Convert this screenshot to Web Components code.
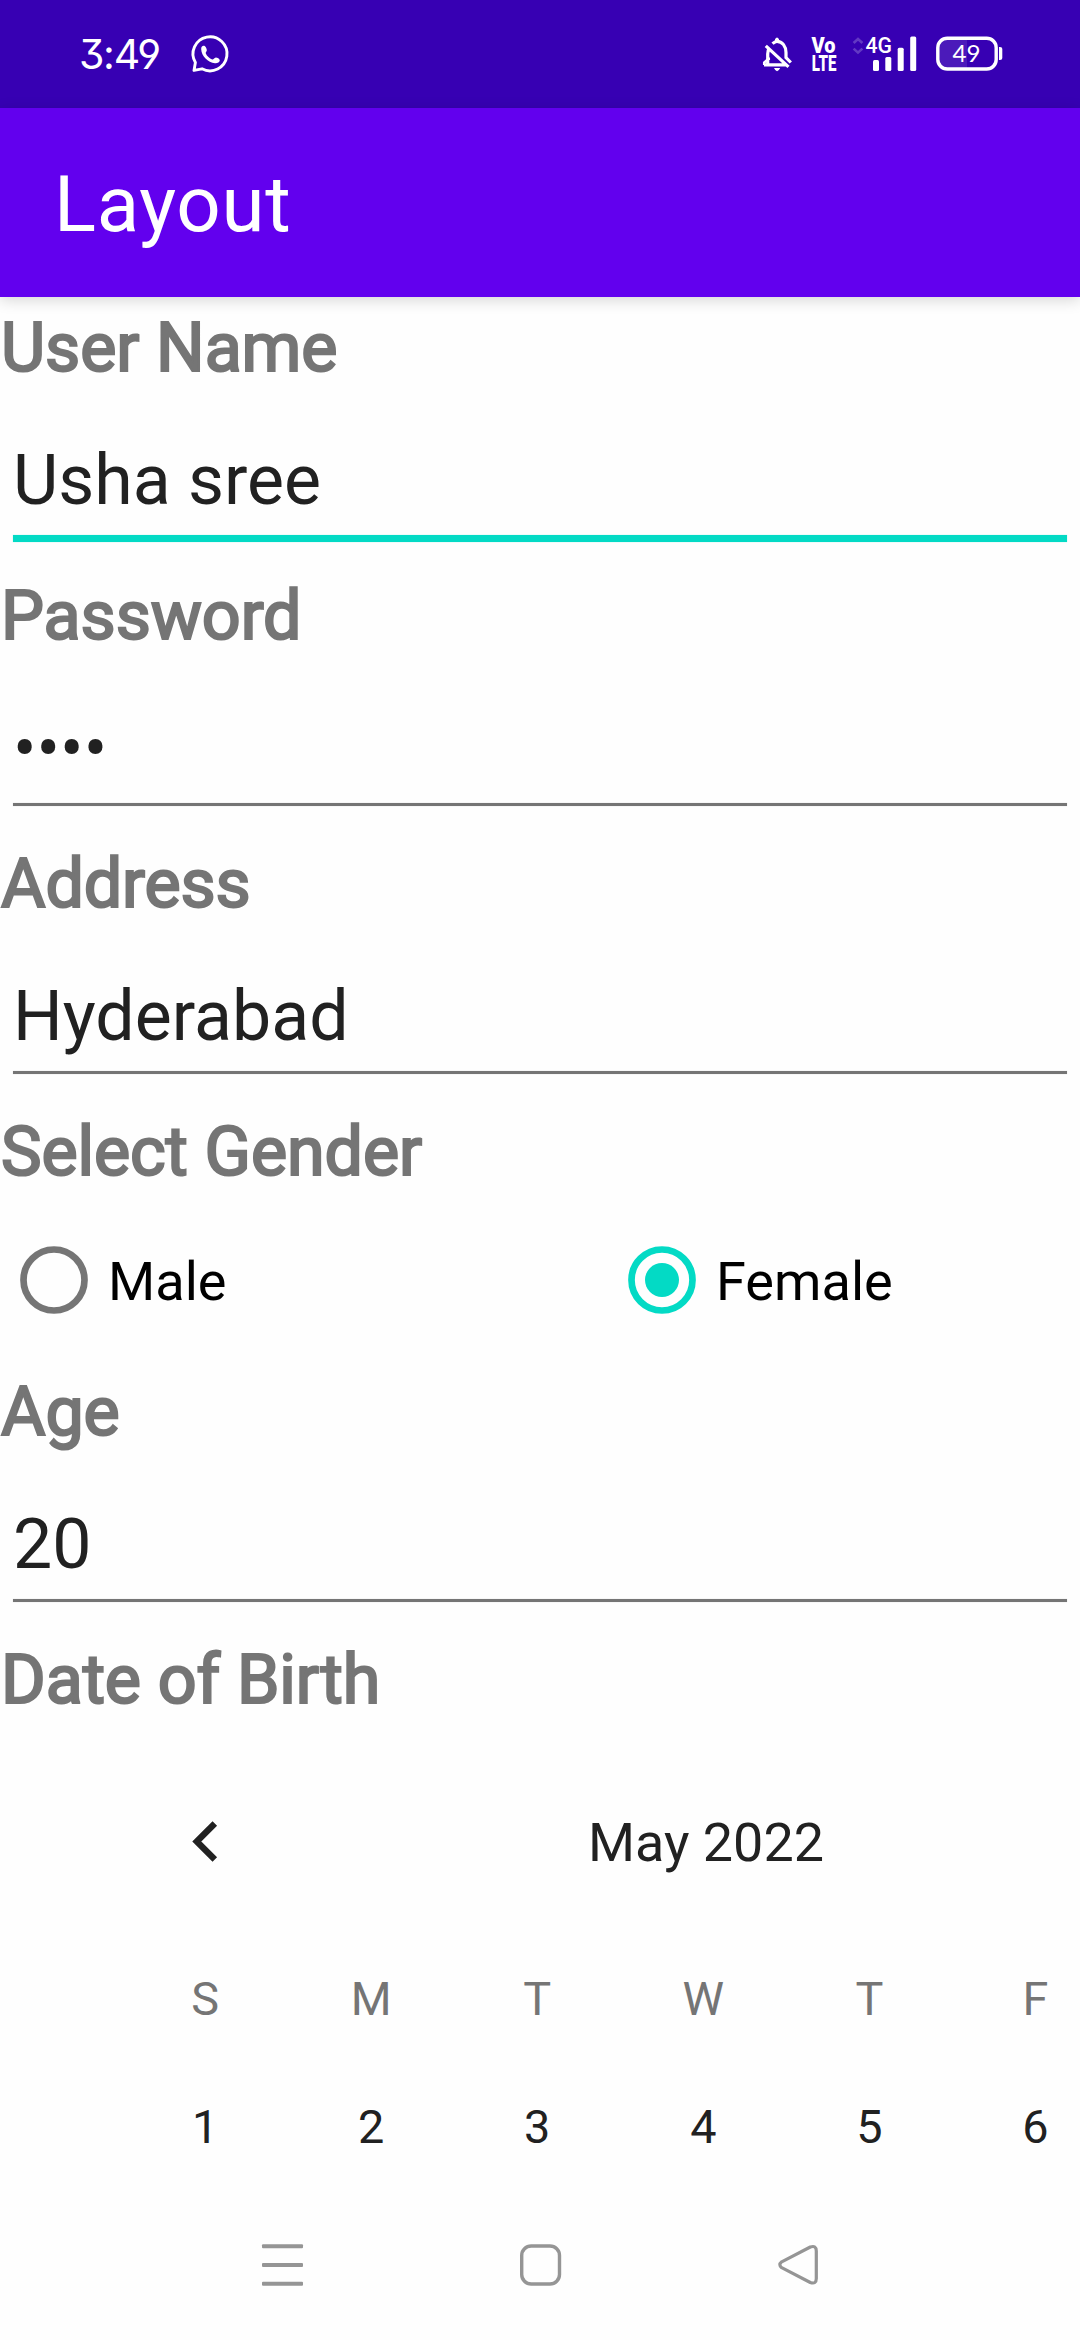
<!DOCTYPE html>
<html lang="en">
<head>
<meta charset="utf-8">
<title>Layout</title>
<style>
html,body{margin:0;padding:0;background:#fefefe}
body{width:1080px;height:2340px;overflow:hidden;font-family:Roboto,sans-serif}
</style>
</head>
<body>
<phone-screen>
  <status-bar slot="status" time="3:49" battery="49"></status-bar>
  <app-bar slot="bar">Layout</app-bar>
  <form-label>User Name</form-label>
  <text-field focused>Usha sree</text-field>
  <form-label>Password</form-label>
  <text-field>••••</text-field>
  <form-label>Address</form-label>
  <text-field>Hyderabad</text-field>
  <form-label>Select Gender</form-label>
  <radio-row>
    <radio-option>Male</radio-option>
    <radio-option checked>Female</radio-option>
  </radio-row>
  <form-label>Age</form-label>
  <text-field>20</text-field>
  <form-label>Date of Birth</form-label>
  <month-calendar month="May 2022" weekdays="S,M,T,W,T,F" days="1,2,3,4,5,6"></month-calendar>
  <nav-bar slot="nav"></nav-bar>
</phone-screen>
<script>
function define(name, render) {
  customElements.define(name, class extends HTMLElement {
    connectedCallback() {
      if (this.shadowRoot) return;
      this.attachShadow({ mode: 'open' }).innerHTML = render(this);
    }
  });
}

define('phone-screen', () => `
<style>
:host{display:flex;flex-direction:column;width:1080px;height:2340px;overflow:hidden;background:#fefefe}
main{flex:1;min-height:0;overflow:hidden;display:flex;flex-direction:column}
</style>
<slot name="status"></slot><slot name="bar"></slot><main><slot></slot></main><slot name="nav"></slot>`);

define('status-bar', el => `
<style>
:host{display:flex;box-sizing:border-box;height:108px;padding:0 74px 0 79px;background:#3700b3;color:#fff;align-items:center;flex:none}
.time{font:400 41px/48px Inter,sans-serif;font-feature-settings:"cv09","cv04";letter-spacing:-1.3px;width:110px;white-space:nowrap}
svg{display:block;flex:none}
.gap{flex:1}
.icons{display:flex;align-items:center}
</style>
<span class="time">${el.getAttribute('time')}</span>
<svg width="42" height="42" viewBox="189 33 42 42" fill="none" stroke="#fff" stroke-width="2.9" stroke-linejoin="round">
  <path d="M195.4 62.5A17 17 0 1 1 202 68.8L194 70.4Z"/>
  <path fill="#fff" stroke="none" d="M201.2 49.2C201 47 202.4 45.4 204.2 45.8C205.6 46.2 207 49.2 206.8 50.6C206.6 51.8 205.4 52.2 205.8 53.4C207 56 209.4 58.4 212.2 59.4C213.6 59.6 214.4 57.6 215.8 57.4C217.4 57.4 219.6 58.8 219.8 60.2C219.8 62.2 217.2 63.4 215 63.2C208 62.6 201.4 56 201.2 49.2Z"/>
</svg>
<span class="gap"></span>
<div class="icons">
<svg width="250" height="44" viewBox="756 32 250 44">
  <g fill="none" stroke="#fff" stroke-width="3.2">
    <path d="M764 64.8H786M767.7 65V54C767.7 51.5 768.4 49.4 769.4 47.6M772.5 43.6C774.4 42 776 41.3 777 41.3C782.4 41.3 786 46.5 786 52.5V57.5L790.8 62.5M765.8 45.8L788.5 66.8"/>
    <path stroke-width="2.5" d="M768.8 60V57.5M764.2 65V62.5L768.3 59"/>
  </g>
  <g fill="#fff">
    <path d="M775 42V39.2Q777 35.8 779 39.2V42ZM774 68H780.2Q777 74.5 774 68Z"/>
    <g font-family="Roboto,sans-serif" font-weight="900">
      <text x="811.5" y="53" font-size="21.5" textLength="24" lengthAdjust="spacingAndGlyphs">Vo</text>
      <text x="811.8" y="70.5" font-size="21.5" textLength="24.6" lengthAdjust="spacingAndGlyphs">LTE</text>
    </g>
    <text x="865.5" y="53" font-family="Roboto,sans-serif" font-weight="500" font-size="22.5" textLength="26.5" lengthAdjust="spacingAndGlyphs">4G</text>
    <rect x="873" y="60" width="6" height="11" rx="1.5"/>
    <rect x="885.3" y="57" width="6" height="14" rx="1.5"/>
    <rect x="897.7" y="47.7" width="6" height="23.3" rx="1.5"/>
    <rect x="910.2" y="36.5" width="6" height="34.5" rx="1.5"/>
    <path fill-opacity=".1" d="M941 38H967V69.5H941Q938 65 938 60V47Q938 41 941 38Z"/>
    <path d="M999 47H1000Q1002.3 47 1002.3 49V58Q1002.3 60 1000 60H999Z"/>
    <text x="952.5" y="61.5" font-family="Lato,sans-serif" font-weight="400" font-size="24" textLength="28" lengthAdjust="spacingAndGlyphs">${el.getAttribute('battery')}</text>
  </g>
  <path fill="none" stroke="#fff" stroke-opacity=".22" stroke-width="2.6" d="M853.6 43L858 39L862.4 43M853.6 48.6L858 52.6L862.4 48.6"/>
  <rect x="937.8" y="38.2" width="58.4" height="30.8" rx="9.5" fill="none" stroke="#fff" stroke-width="3.4"/>
</svg>
</div>`);

define('app-bar', () => `
<style>
:host{display:flex;box-sizing:border-box;height:189px;padding-left:54px;background:#6200ee;color:#fff;align-items:center;flex:none;
box-shadow:0 3px 14px rgba(0,0,0,.16);font:400 78px/92px Roboto,sans-serif;letter-spacing:.7px;z-index:1}
span{padding-top:4px}
</style><span><slot></slot></span>`);

define('form-label', () => `
<style>
:host{display:block;box-sizing:border-box;height:93px;padding-left:1px;line-height:102px;font-size:68.2px;letter-spacing:-.1px;color:#757575;-webkit-text-stroke:2.2px #757575;flex:none;white-space:nowrap}
</style><slot></slot>`);

define('text-field', el => {
  const on = el.hasAttribute('focused');
  return `
<style>
:host{display:flex;flex-direction:column;box-sizing:border-box;height:175px;padding:49px 13px 0;font-size:69.8px;line-height:82px;color:#212121;flex:none}
.line{margin-top:14px;height:${on ? 7 : 3}px;background:${on ? '#03dac5' : '#757575'};box-shadow:0 0 1px ${on ? '#03dac566' : '#75757588'}}
</style><span><slot></slot></span><div class="line"></div>`;
});

define('radio-row', () => `
<style>:host{display:grid;grid-template-columns:608px 1fr;height:167px;box-sizing:border-box;padding-top:5px;align-items:center;flex:none}</style><slot></slot>`);

define('radio-option', el => {
  const on = el.hasAttribute('checked'), c = on ? '#03dac5' : '#757575';
  return `
<style>
:host{display:flex;align-items:center;padding-left:19px;gap:19px;font-size:54.1px;line-height:64px;color:#000}
svg{display:block}
span{padding-top:3px}
</style>
<svg width="70" height="70" viewBox="-35 -35 70 70"><circle r="30.5" fill="none" stroke="${c}" stroke-width="6.7"/>${on ? `<circle r="17" fill="${c}"/>` : ''}</svg>
<span><slot></slot></span>`;
});

define('month-calendar', el => `
<style>
:host{display:block;padding-left:122px;color:#212121;flex:none}
header{display:flex;align-items:center;height:239px}
header svg{display:block;margin:-1px 0 0 67px;flex:none}
h2{margin:0;padding:3px 0 0 369px;font:400 53.9px/64px Roboto,sans-serif;white-space:nowrap}
.row{display:grid;grid-template-columns:repeat(6,166.1px);height:128px;text-align:center;font-size:46.8px;line-height:76px}
.week{color:#757575}
</style>
<header><svg width="30" height="44" viewBox="189 1819 30 44" fill="none" stroke="#212121" stroke-width="6.4"><path d="M214.8 1823.4L196.8 1841.4L214.8 1859.4"/></svg><h2>${el.getAttribute('month')}</h2></header>
<div class="row week">${el.getAttribute('weekdays').split(',').map(d => `<span>${d}</span>`).join('')}</div>
<div class="row">${el.getAttribute('days').split(',').map(d => `<span>${d}</span>`).join('')}</div>`);

define('nav-bar', () => `
<style>
:host{display:flex;box-sizing:border-box;height:150px;padding:0 260px;justify-content:space-between;align-items:center;background:#fefefe;flex:none}
svg{display:block}
</style>
<svg width="46" height="46" viewBox="260 2242.5 46 46" fill="#959595"><rect x="262" y="2244.8" width="41" height="4" rx="1"/><rect x="262" y="2263.5" width="41" height="4" rx="1"/><rect x="262" y="2282.2" width="41" height="4" rx="1"/></svg>
<svg width="46" height="46" viewBox="517 2242.5 46 46" fill="none" stroke="#959595" stroke-width="3.4"><rect x="521.7" y="2246.5" width="37.8" height="38" rx="9.5"/></svg>
<svg width="46" height="46" viewBox="774 2242.5 46 46" fill="none" stroke="#959595" stroke-width="3.2" stroke-linejoin="round"><path d="M781.7 2262.3L810.3 2247.5Q816.3 2245.5 816.3 2251.5V2279Q816.3 2285 810.3 2283L781.7 2268.2Q778 2265.2 781.7 2262.3Z"/></svg>`);
</script>
</body>
</html>
